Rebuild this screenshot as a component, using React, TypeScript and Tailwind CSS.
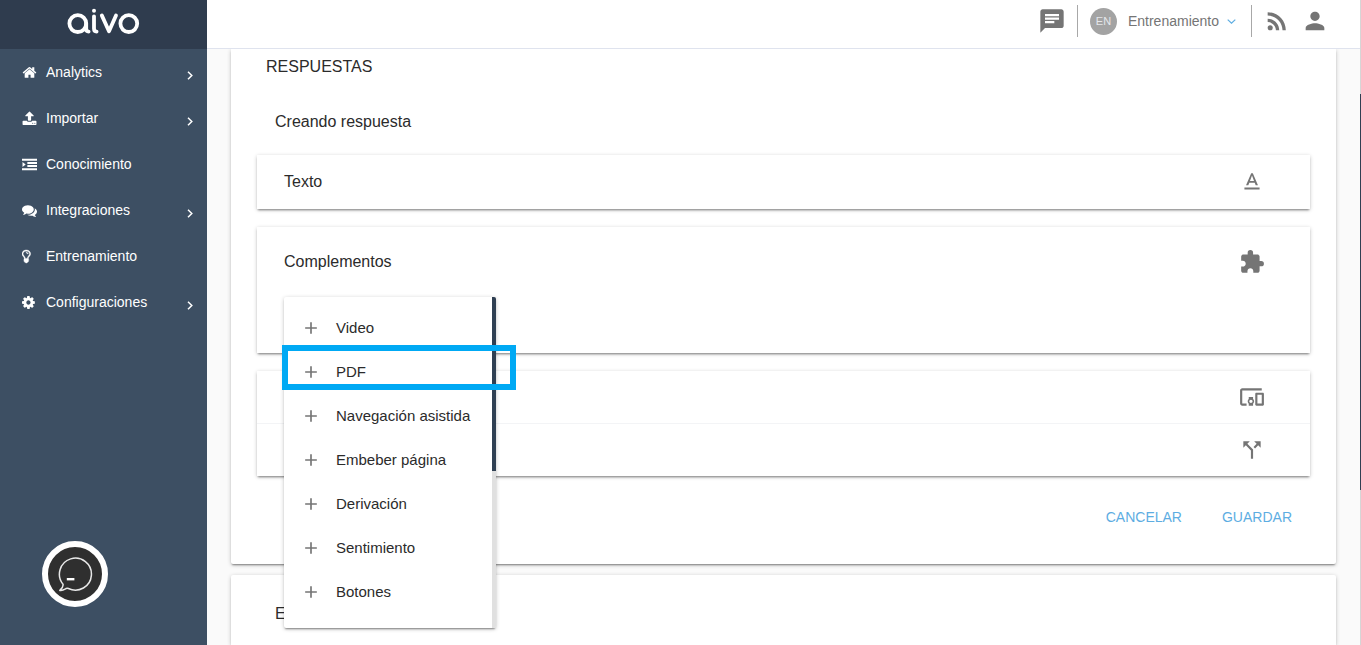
import type { ReactNode } from 'react';
import {
  MdAdd,
  MdCallSplit,
  MdChat,
  MdDevicesOther,
  MdExtension,
  MdPerson,
  MdRssFeed,
  MdTextFormat,
} from 'react-icons/md';

type NavItem = {
  label: string;
  icon: ReactNode;
  expandable?: boolean;
};

const navItems: NavItem[] = [
  {
    label: 'Analytics',
    expandable: true,
    icon: (
      <path d="M1472 992v480q0 26-19 45t-45 19h-384v-384h-256v384h-384q-26 0-45-19t-19-45v-480q0-1 .5-3t.5-3l575-474 575 474q1 2 1 6zm223-69l-62 74q-8 9-21 11h-3q-13 0-21-7l-692-577-692 577q-12 8-24 7-13-2-21-11l-62-74q-8-10-7-23.5t11-21.5l719-599q32-26 76-26t76 26l244 204v-195q0-14 9-23t23-9h192q14 0 23 9t9 23v408l219 182q10 8 11 21.5t-7 23.5z" />
    ),
  },
  {
    label: 'Importar',
    expandable: true,
    icon: (
      <path d="M1344 1472q0-26-19-45t-45-19-45 19-19 45 19 45 45 19 45-19 19-45zm256 0q0-26-19-45t-45-19-45 19-19 45 19 45 45 19 45-19 19-45zm128-224v320q0 40-28 68t-68 28h-1472q-40 0-68-28t-28-68v-320q0-40 28-68t68-28h427q21 56 70.5 92t110.5 36h256q61 0 110.5-36t70.5-92h427q40 0 68 28t28 68zm-325-648q-17 40-59 40h-256v448q0 26-19 45t-45 19h-256q-26 0-45-19t-19-45v-448h-256q-42 0-59-40-17-39 14-69l448-448q18-19 45-19t45 19l448 448q31 30 14 69z" />
    ),
  },
  {
    label: 'Conocimiento',
    icon: (
      <path d="M0 200h1792v240H0zM640 584h1152v240H640zM640 968h1152v240H640zM0 1352h1792v240H0zM60 584l380 312-380 312z" />
    ),
  },
  {
    label: 'Integraciones',
    expandable: true,
    icon: (
      <path d="M1408 768q0 139-94 257t-256.5 186.5-353.5 68.5q-86 0-176-16-124 88-278 128-36 9-86 16h-3q-11 0-20.5-8t-11.5-21q-1-3-1-6.5t.5-6.5 2-6l2.5-5 3.5-5.5 4-5 4.5-5 4-4.5q5-6 23-25t26-29.5 22.5-29 25-38.5 20.5-44q-124-72-195-177t-71-224q0-139 94-257t256.5-186.5 353.5-68.5 353.5 68.5 256.5 186.5 94 257zm384 256q0 120-71 224.5t-195 176.5q10 24 20.5 44t25 38.5 22.5 29 26 29.5 23 25q1 1 4 4.5t4.5 5 4 5 3.5 5.5l2.5 5 2 6 .5 6.5-1 6.5q-3 14-13 22t-22 7q-50-7-86-16-154-40-278-128-90 16-176 16-271 0-472-132 58 4 88 4 161 0 309-45t264-129q125-92 192-212t67-254q0-77-23-152 129 71 204 178t75 230z" />
    ),
  },
  {
    label: 'Entrenamiento',
    icon: (
      <path
        transform="translate(-384 0)"
        d="M1120 576q0 13-9.5 22.5t-22.5 9.5-22.5-9.5-9.5-22.5q0-46-54-71t-106-25q-13 0-22.5-9.5t-9.5-22.5 9.5-22.5 22.5-9.5q50 0 99.5 16t87 54 37.5 90zm160 0q0-72-34.5-134t-90-101.5-123-62-136.5-22.5-136.5 22.5-123 62-90 101.5-34.5 134q0 101 68 180 10 11 30.5 33t30.5 33q128 153 141 298h228q13-145 141-298 10-11 30.5-33t30.5-33q68-79 68-180zm128 0q0 155-103 268-45 49-74.5 87t-59.5 95.5-34 107.5q47 28 47 82 0 37-25 64 25 27 25 64 0 52-45 81 13 23 13 47 0 46-31.5 71t-77.5 25q-20 44-60 70t-87 26-87-26-60-70q-46 0-77.5-25t-31.5-71q0-24 13-47-45-29-45-81 0-37 25-64-25-27-25-64 0-54 47-82-4-50-34-107.5t-59.5-95.5-74.5-87q-103-113-103-268 0-99 44.5-184.5t117-142 164-89 186.5-32.5 186.5 32.5 164 89 117 142 44.5 184.5z"
        stroke="currentColor"
        strokeWidth="50"
      />
    ),
  },
  {
    label: 'Configuraciones',
    expandable: true,
    icon: (
      <path
        transform="translate(-128 0)"
        d="M1152 896q0-106-75-181t-181-75-181 75-75 181 75 181 181 75 181-75 75-181zm512-109v222q0 12-8 23t-20 13l-185 28q-19 54-39 91 35 50 107 138 10 12 10 25t-9 23q-27 37-99 108t-94 71q-12 0-26-9l-138-108q-44 23-91 38-16 136-29 186-7 28-36 28h-222q-14 0-24.5-8.5t-11.5-21.5l-28-184q-49-16-90-37l-141 107q-10 9-25 9-14 0-25-11-126-114-165-168-7-10-7-23 0-12 8-23 15-21 51-66.5t54-70.5q-27-50-41-99l-183-27q-13-2-21-12.5t-8-23.5v-222q0-12 8-23t19-13l186-28q14-46 39-92-40-57-107-138-10-12-10-24 0-10 9-23 26-36 98.5-107.5t94.5-71.5q13 0 26 10l138 107q44-23 91-38 16-136 29-186 7-28 36-28h222q14 0 24.5 8.5t11.5 21.5l28 184q49 16 90 37l142-107q9-9 24-9 13 0 25 10 129 119 165 170 7 8 7 22 0 12-8 23-15 21-51 66.5t-54 70.5q26 50 41 98l183 28q13 2 21 12.5t8 23.5z"
      />
    ),
  },
];

const complements = [
  'Video',
  'PDF',
  'Navegación asistida',
  'Embeber página',
  'Derivación',
  'Sentimiento',
  'Botones',
];

function Logo() {
  return (
    <svg
      role="img"
      aria-label="aivo"
      className="h-[27px] w-[74px]"
      viewBox="66 8 74 27"
      fill="none"
      stroke="#fff"
      strokeWidth="3.8"
      strokeLinecap="round"
      strokeLinejoin="round"
    >
      <circle cx="76.8" cy="23.6" r="8.4" />
      <path d="M85.2 23.6V28.6q0 3 2.4 3" />
      <path d="M93 16.3V28.6q0 3 2.6 3" />
      <circle cx="93" cy="10.8" r="2" fill="#fff" stroke="none" />
      <path d="M100.8 15.4L108 31.2L115 15.4" />
      <circle cx="127.8" cy="23.6" r="8.4" />
    </svg>
  );
}

function Sidebar() {
  return (
    <aside className="relative w-[207px] shrink-0 bg-[#3d4f63] text-white">
      <div className="flex h-[49px] items-start justify-center bg-[#2f3c4e] pt-2">
        <Logo />
      </div>
      <nav>
        {navItems.map((item) => (
          <a key={item.label} href="#" className="flex h-[46px] items-center pr-3.5 pl-[22px] text-sm">
            <svg className="mr-[9px] size-[15px]" viewBox="0 0 1792 1792" fill="currentColor" aria-hidden="true">
              {item.icon}
            </svg>
            <span className="flex-1">{item.label}</span>
            {item.expandable && (
              <svg
                className="mt-1.5 h-[9px] w-[6px]"
                viewBox="0 0 6 9"
                fill="none"
                stroke="currentColor"
                strokeWidth="1.5"
                aria-hidden="true"
              >
                <path d="M1 .8L4.8 4.5L1 8.2" />
              </svg>
            )}
          </a>
        ))}
      </nav>
      <button
        type="button"
        aria-label="Chat"
        className="absolute bottom-[38px] left-[42px] flex size-[66px] items-center justify-center rounded-full border-6 border-white bg-[#2f2f2f]"
      >
        <svg className="size-9" viewBox="0 0 36 36" fill="none" stroke="#e8e8e8" strokeWidth="1.5">
          <path
            strokeLinejoin="round"
            d="M6 28.2A16 16 0 1 1 11.4 32.5Q9.6 31.8 8 33.2Q5.6 34.8 2.8 34.4Q6.6 31.4 6 28.2Z"
          />
          <path d="M9.8 23.2h7.6" stroke="#fff" strokeWidth="2.4" />
        </svg>
      </button>
    </aside>
  );
}

function Header() {
  return (
    <header className="flex h-[49px] shrink-0 items-center justify-end border-b border-[#dfe3ee] bg-white pr-[31px] pb-1.5 text-[#757575]">
      <button type="button" aria-label="Mensajes">
        <MdChat size={28} />
      </button>
      <div className="ml-[11px] h-8 w-px bg-[#a8a8a8]" />
      <span className="ml-3 flex size-[27px] items-center justify-center rounded-full bg-[#a3a3a3] text-[11px] text-gray-200">
        EN
      </span>
      <button type="button" className="ml-[11px] flex items-center text-sm">
        Entrenamiento
        <svg className="ml-2 h-[5px] w-[9px]" viewBox="0 0 9 5" fill="none" stroke="#5dade2" strokeWidth="1.2">
          <path d="M.7 .6L4.5 4.2L8.3 .6" />
        </svg>
      </button>
      <div className="ml-[15px] h-8 w-px bg-[#a8a8a8]" />
      <button type="button" aria-label="Novedades" className="ml-[11px]">
        <MdRssFeed size={28} />
      </button>
      <button type="button" aria-label="Perfil" className="ml-2.5">
        <MdPerson size={28} />
      </button>
    </header>
  );
}

const cardShadow =
  'shadow-[0_1px_4px_0_rgba(0,0,0,0.22),0_2px_2px_-1px_rgba(0,0,0,0.4)]';

function Panel({ className = '', children }: { className?: string; children: ReactNode }) {
  return <div className={`relative bg-white ${cardShadow} ${className}`}>{children}</div>;
}

function ComplementsMenu() {
  return (
    <div className="absolute top-[70px] left-[27px] z-10 w-[212px]">
      <div className={`flex h-[331px] overflow-hidden rounded-xs bg-white ${cardShadow}`}>
        <ul className="flex-1 pt-[9px]">
          {complements.map((name) => (
            <li key={name}>
              <button
                type="button"
                className="flex h-11 w-full items-center gap-[15px] pl-[17px] text-[15px] whitespace-nowrap text-[#2b2b2b]"
              >
                <MdAdd size={20} className="shrink-0 text-[#757575]" />
                {name}
              </button>
            </li>
          ))}
        </ul>
        <div className="w-1 bg-[#e0e0e0]">
          <div className="h-[174px] bg-[#2f3f52]" />
        </div>
      </div>
      {/* highlight around the PDF entry */}
      <div className="pointer-events-none absolute top-12 -left-0.5 h-[45px] w-[234px] border-6 border-[#00a9f4]" />
    </div>
  );
}

export default function App() {
  return (
    <div className="flex h-screen overflow-hidden bg-[#fafafa] font-['Liberation_Sans',Arial,sans-serif] text-[#2b2b2b]">
      <Sidebar />
      <div className="flex min-w-0 flex-1 flex-col">
        <Header />
        <main className="flex min-h-0 flex-1 flex-col gap-[11px] overflow-hidden px-6">
          <section className={`shrink-0 rounded-b-xs bg-white px-[26px] pb-[29px] ${cardShadow}`}>
            <h1 className="pt-1.5 pl-[9px] text-base">RESPUESTAS</h1>
            <h2 className="mt-[31px] pl-[18px] text-base">Creando respuesta</h2>

            <Panel className="mt-[21px] flex h-[54px] items-center justify-between pr-[45px] pl-[27px]">
              <span>Texto</span>
              <MdTextFormat size={26} className="text-[#757575]" />
            </Panel>

            <Panel className="mt-[18px] h-[126px] pt-[22px] pr-[45px] pl-[27px]">
              <div className="flex items-center justify-between">
                <span>Complementos</span>
                <MdExtension size={26} className="text-[#757575]" />
              </div>
              <ComplementsMenu />
            </Panel>

            <Panel className="mt-[18px]">
              <div className="flex h-[53px] items-center justify-end border-b border-gray-100 pr-[45px]">
                <MdDevicesOther size={26} className="text-[#757575]" />
              </div>
              <div className="flex h-[52px] items-center justify-end pr-[45px]">
                <MdCallSplit size={26} className="text-[#757575]" />
              </div>
            </Panel>

            <div className="mt-[23px] flex justify-end gap-10 pr-[18px] text-sm text-[#5dade2]">
              <button type="button" className="h-9">
                CANCELAR
              </button>
              <button type="button" className="h-9">
                GUARDAR
              </button>
            </div>
          </section>

          <section className={`flex-1 rounded-t-xs bg-white px-[26px] ${cardShadow}`}>
            <h2 className="pt-[27px] pl-[18px] text-base">E</h2>
          </section>
        </main>
      </div>
      {/* page scrollbar */}
      <div className="w-px bg-[#d6d6d6] pt-[94px]">
        <div className="h-[396px] bg-[#2f3f52]" />
      </div>
    </div>
  );
}
